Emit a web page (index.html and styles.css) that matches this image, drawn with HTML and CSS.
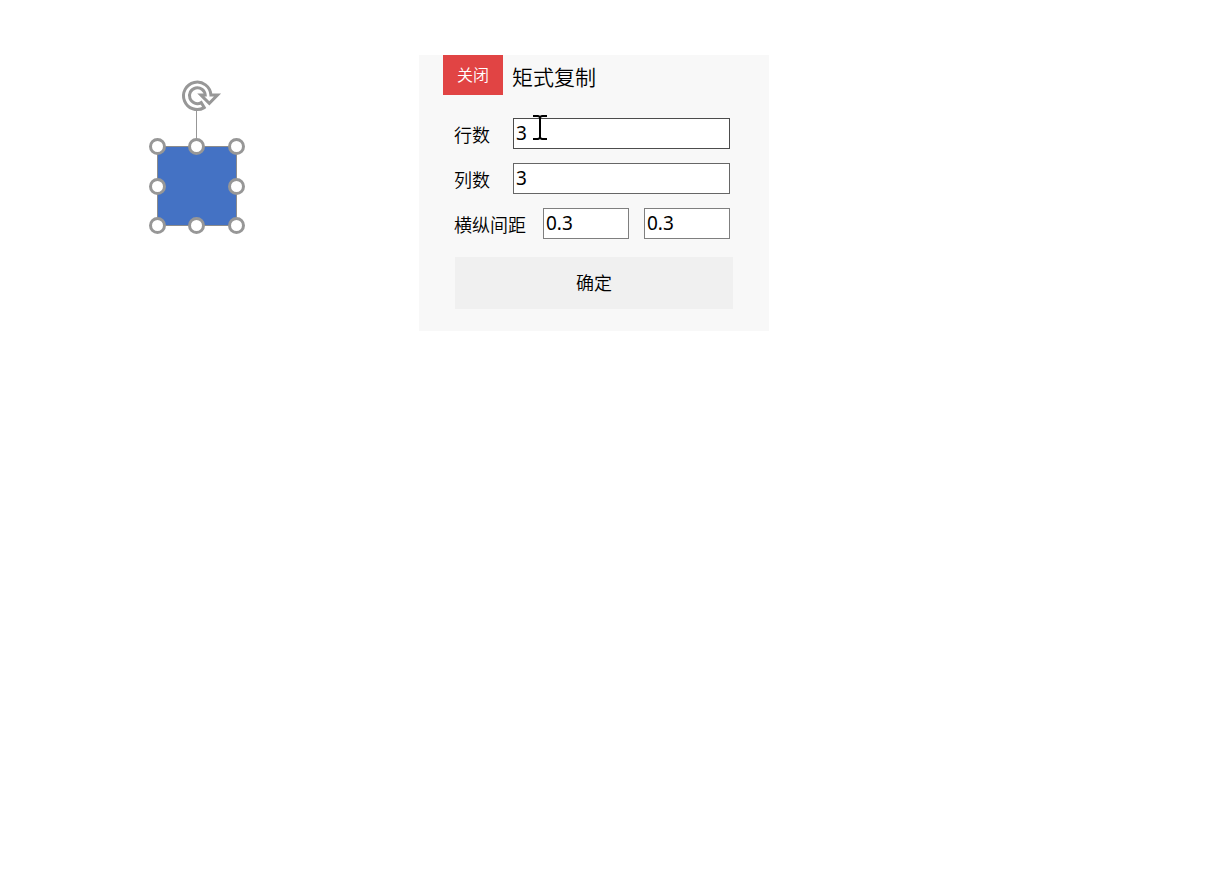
FILE: index.html
```html
<!DOCTYPE html>
<html lang="zh-CN">
<head>
<meta charset="utf-8">
<meta name="viewport" content="width=device-width, initial-scale=1">
<title>矩式复制</title>
<link rel="stylesheet" href="styles.css">
</head>
<body>
<main class="slide">
  <svg class="shape" viewBox="148 76 98 160" role="img" aria-label="已选中的正方形">
    <path class="outline" d="M196.500 110V146"/>
    <rect class="square" x="157.500" y="146.500" width="79" height="79"/>
    <g class="handles">
      <circle cx="157.500" cy="146.500" r="7"/>
      <circle cx="196.500" cy="146.500" r="7"/>
      <circle cx="236.500" cy="146.500" r="7"/>
      <circle cx="157.500" cy="186.500" r="7"/>
      <circle cx="236.500" cy="186.500" r="7"/>
      <circle cx="157.500" cy="225.500" r="7"/>
      <circle cx="196.500" cy="225.500" r="7"/>
      <circle cx="236.500" cy="225.500" r="7"/>
    </g>
    <path class="rotate" d="M204.200 107.600A13.700 13.700 0 1 1 210.900 95H217.500L209.300 103.300L200.900 95H205.200A7.900 7.900 0 1 0 201.200 102.600Z"/>
  </svg>

  <form class="panel">
    <header class="panel-head">
      <button class="close" type="button">关闭</button>
      <h1 class="title">矩式复制</h1>
    </header>
    <div class="fields">
      <div class="row">
        <label class="label" for="rows">行数</label>
        <div class="control">
          <input class="input hovered" id="rows" type="text" value="3">
          <svg class="cursor" viewBox="0 0 14 26" aria-hidden="true"><path d="M0 2H5L7 3L9 2H14M7 3V24M0 25H5L7 24L9 25H14"/></svg>
        </div>
      </div>
      <div class="row">
        <label class="label" for="cols">列数</label>
        <div class="control"><input class="input" id="cols" type="text" value="3"></div>
      </div>
      <div class="row">
        <label class="label label-wide" for="gap-x">横纵间距</label>
        <div class="control pair">
          <input class="input light" id="gap-x" type="text" value="0.3">
          <input class="input light" id="gap-y" type="text" value="0.3" aria-label="纵向间距">
        </div>
      </div>
    </div>
    <button class="confirm" type="button">确定</button>
  </form>
</main>
</body>
</html>
```

FILE: styles.css
```css
* {
  box-sizing: border-box;
}

body {
  margin: 0;
  background: #fff;
  color: #000;
  font-family: "Noto Sans", "Noto Sans CJK SC", sans-serif;
  font-size: 18px;
  font-weight: 350;
}

button,
input {
  font-family: inherit;
  font-weight: inherit;
}

.slide {
  display: flex;
  align-items: flex-start;
  gap: 173px;
  min-height: 100vh;
  padding: 55px 24px 24px 148px;
}

.shape {
  flex: none;
  width: 98px;
  margin-top: 21px;
}

.outline {
  stroke: #979797;
}

.square {
  fill: #4472c4;
  stroke: #8c8c8c;
}

.handles {
  fill: #fff;
  stroke: #979797;
  stroke-width: 3;
}

.rotate {
  fill: #fff;
  stroke: #979797;
  stroke-width: 3;
}

.panel {
  flex: 0 1 350px;
  padding: 0 36px 22px;
  background: #f8f8f8;
}

.panel-head {
  display: flex;
  align-items: center;
  gap: 9px;
  margin-left: -12px;
}

.close {
  width: 60px;
  height: 40px;
  padding: 0 0 2px;
  border: 0;
  background: #e14444;
  color: #fff;
  font-size: 16px;
}

.title {
  margin: 0;
  padding-top: 4px;
  font-size: 21px;
  font-weight: inherit;
  line-height: 32px;
}

.fields {
  display: grid;
  gap: 14px;
  margin: 23px 3px 18px -1px;
}

.row {
  display: flex;
}

.label {
  flex: none;
  width: 59px;
  padding-top: 4px;
  line-height: 27px;
}

.label-wide {
  width: 89px;
}

.control {
  position: relative;
  flex: 1;
  min-width: 0;
}

.pair {
  display: flex;
  gap: 15px;
}

.input {
  display: block;
  width: 100%;
  min-width: 0;
  height: 31px;
  padding: 0 2px 2px;
  border: 1px solid #666;
  border-radius: 0;
  background: #fff;
  color: #000;
  font-size: 19px;
  font-weight: 400;
}

.hovered {
  border-color: #4c4c4c;
}

.light {
  border-color: #7f7f7f;
}

.cursor {
  position: absolute;
  top: -4px;
  left: 20px;
  width: 14px;
  height: 26px;
  fill: none;
  stroke: #000;
  stroke-width: 2;
}

.confirm {
  display: block;
  width: 100%;
  height: 52px;
  padding: 0 0 2px;
  border: 0;
  background: #f0f0f0;
  color: #000;
  font-size: 18px;
}
```
